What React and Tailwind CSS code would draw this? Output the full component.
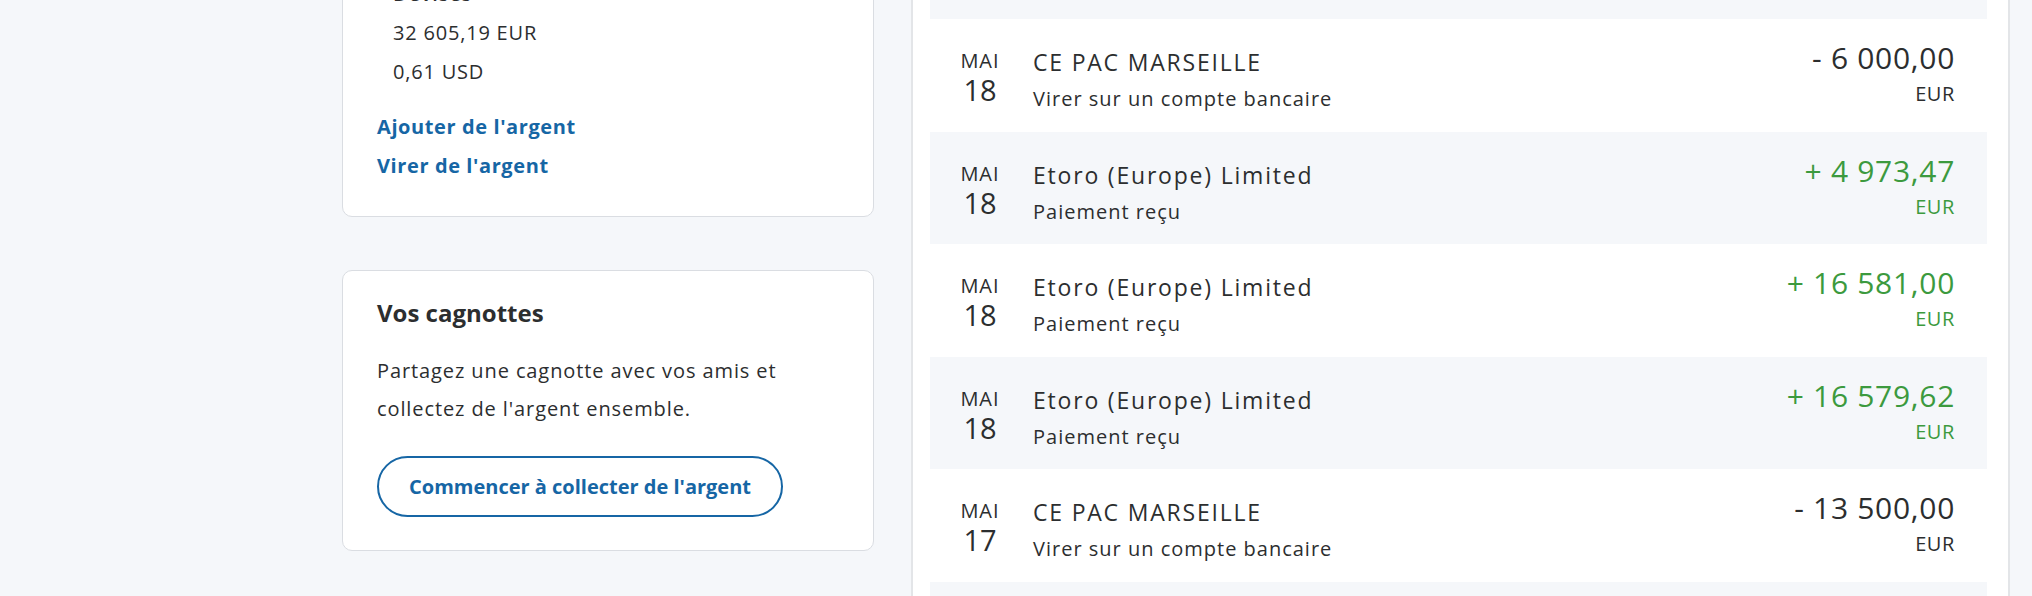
import React from 'react';

const transactions = [
  { month: 'MAI', day: '18', name: 'CE PAC MARSEILLE', type: 'Virer sur un compte bancaire', amount: '- 6 000,00', credit: false },
  { month: 'MAI', day: '18', name: 'Etoro (Europe) Limited', type: 'Paiement reçu', amount: '+ 4 973,47', credit: true },
  { month: 'MAI', day: '18', name: 'Etoro (Europe) Limited', type: 'Paiement reçu', amount: '+ 16 581,00', credit: true },
  { month: 'MAI', day: '18', name: 'Etoro (Europe) Limited', type: 'Paiement reçu', amount: '+ 16 579,62', credit: true },
  { month: 'MAI', day: '17', name: 'CE PAC MARSEILLE', type: 'Virer sur un compte bancaire', amount: '- 13 500,00', credit: false },
  { month: 'MAI', day: '17', name: 'Etoro (Europe) Limited', type: 'Paiement reçu', amount: '+ 9 210,00', credit: true },
];

const TransactionRow = ({ tx, striped }) => {
  const amountColor = tx.credit ? 'text-[#3c9a3e]' : 'text-[#2c2e2f]';
  return (
    <div className={`flex h-[112.6px] items-start pl-[30px] pr-[32px] ${striped ? 'bg-[#f5f7fa]' : 'bg-white'}`}>
      <div className="w-[40px] pt-[30px] flex flex-col items-center text-[#2c2e2f]">
        <span className="text-[20px] leading-[24px] tracking-[1px]">{tx.month}</span>
        <span className="text-[29px] leading-[32px] mt-[1px]">{tx.day}</span>
      </div>
      <div className="ml-[33px] flex-1 pt-[30px] text-[#2c2e2f]">
        <div className="text-[23px] leading-[26px] tracking-[1.8px]">{tx.name}</div>
        <div className="text-[20px] leading-[24px] tracking-[1px] mt-[12px]">{tx.type}</div>
      </div>
      <div className={`pt-[23px] flex flex-col items-end whitespace-nowrap ${amountColor}`}>
        <span className="text-[30px] leading-[32px] tracking-[0.7px]">{tx.amount}</span>
        <span className="text-[20px] leading-[24px] tracking-[0.6px] mt-[8px]">EUR</span>
      </div>
    </div>
  );
};

export default function App() {
  return (
    <div
      className="h-[596px] w-[2032px] overflow-hidden bg-[#f5f7fa] flex items-start pl-[342px]"
      style={{ fontFamily: '"Open Sans", "Noto Sans", sans-serif' }}
    >
      {/* Colonne gauche */}
      <div className="w-[532px] shrink-0 flex flex-col">
        <div className="-mt-[60px] bg-white border border-[#dadde2] rounded-[10px] pt-[33px] pb-[31px] px-[34px]">
          <div className="pl-[16px] text-[#2c2e2f] text-[20px] leading-[39px] tracking-[0.8px]">
            <div className="font-semibold">Devises</div>
            <div>32 605,19 EUR</div>
            <div>0,61 USD</div>
          </div>
          <div className="mt-[16px] flex flex-col items-start text-[20px] leading-[39px] tracking-[0.6px] font-bold text-[#1666a5]">
            <a href="#">Ajouter de l'argent</a>
            <a href="#">Virer de l'argent</a>
          </div>
        </div>

        <div className="mt-[53px] bg-white border border-[#dadde2] rounded-[10px] pt-[26px] pb-[33px] px-[34px]">
          <h3 className="text-[24px] leading-[32px] font-bold text-[#2c2e2f]">Vos cagnottes</h3>
          <p className="mt-[23px] text-[20px] leading-[38px] tracking-[0.9px] text-[#2c2e2f] w-[440px]">
            Partagez une cagnotte avec vos amis et collectez de l'argent ensemble.
          </p>
          <button className="mt-[28px] w-[406px] h-[61px] rounded-full border-2 border-[#1666a5] text-[#1666a5] text-[20px] font-bold flex items-center justify-center">
            Commencer à collecter de l'argent
          </button>
        </div>
      </div>

      {/* Activité récente */}
      <div className="ml-[37px] w-[1099px] bg-white border-x-2 border-[#e3e5e8] pl-[17px] pr-[21px]">
        <div className="h-[19px] bg-[#f5f7fa]" />
        {transactions.map((tx, i) => (
          <TransactionRow key={i} tx={tx} striped={i % 2 === 1} />
        ))}
      </div>
    </div>
  );
}
